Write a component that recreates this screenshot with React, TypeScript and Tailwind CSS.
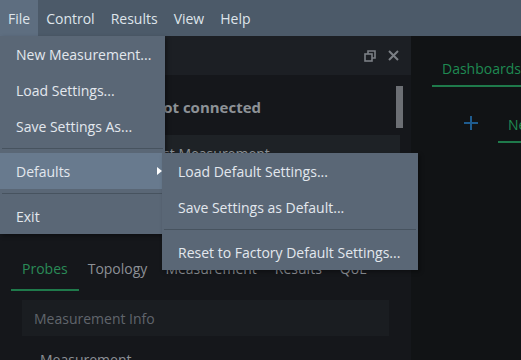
import React from 'react';

const menuFont = { fontFamily: '"Open Sans", "Noto Sans", sans-serif' };

const Separator: React.FC = () => (
  <div className="my-1 mx-[2px] h-px bg-[#47535f]" />
);

const MenuItem: React.FC<{ label: string; active?: boolean; arrow?: boolean }> = ({ label, active, arrow }) => (
  <div
    className={
      'relative flex h-9 items-center pl-4 pr-8 text-[14px] text-[#e3e8ee] whitespace-nowrap ' +
      (active ? 'bg-[#687a8e]' : '')
    }
  >
    {label}
    {arrow && (
      <span className="absolute right-[3px] top-1/2 -translate-y-1/2 h-0 w-0 border-y-[4px] border-l-[5px] border-y-transparent border-l-white" />
    )}
  </div>
);

const App: React.FC = () => {
  return (
    <div className="relative h-[360px] w-[521px] overflow-hidden bg-[#15171b]" style={menuFont}>
      {/* menu bar */}
      <div className="flex h-9 items-center bg-[#4c5a69] text-[14px] text-[#dfe5eb]">
        <div className="flex h-full items-center bg-[#5e6e80] px-2">File</div>
        <div className="px-2">Control</div>
        <div className="px-2">Results</div>
        <div className="px-2">View</div>
        <div className="px-2">Help</div>
      </div>

      <div className="flex h-[324px]">
        {/* left dock */}
        <div className="flex w-[411px] shrink-0 flex-col bg-[#15171b]">
          <div className="flex h-[39px] shrink-0 items-center justify-end gap-[12px] bg-[#1c1f24] pr-[12px]">
            <svg width="12" height="12" viewBox="0 0 12 12" fill="none" stroke="#7b7f85" strokeWidth="1.6">
              <rect x="1" y="4" width="7" height="7" />
              <path d="M4 4V1h7v7H8" />
            </svg>
            <svg width="11" height="11" viewBox="0 0 11 11" stroke="#7b7f85" strokeWidth="2">
              <path d="M1 1l9 9M10 1l-9 9" />
            </svg>
          </div>
          <div className="relative min-h-0 flex-1 overflow-hidden">
            <div className="flex h-[60px] items-center pl-[151px] pt-[4px] text-[15px] font-bold text-[#8d9297]">
              Not connected
            </div>
            <div className="absolute right-[8px] top-[11px] h-[42px] w-[7px] bg-[#6c6f74]" />
            <div className="ml-[11px] mr-[11px] h-[40px] bg-[#1e2226] pl-[137px] pt-[8px] text-[14px] text-[#8d9297]">
              Last Measurement
            </div>
            <div className="mt-[83px] flex h-[33px] items-start px-[11px] text-[14px] text-[#8c9096]">
              <div className="flex h-full flex-col items-center">
                <div className="px-[11px] text-[#2a8b57]">Probes</div>
                <div className="mt-auto h-[2px] w-full bg-[#1f7a4b]" />
              </div>
              <div className="px-[9px]">Topology</div>
              <div className="px-[9px]">Measurement</div>
              <div className="px-[9px]">Results</div>
              <div className="px-[9px]">QoE</div>
            </div>
            <div className="ml-[22px] mt-[9px] flex h-[36px] w-[367px] items-center bg-[#1a1d21] pl-[12px] text-[14px] text-[#60656c]">
              Measurement Info
            </div>
            <div className="ml-[40px] mt-[13px] text-[14px] text-[#8c9096]">Measurement</div>
          </div>
        </div>

        {/* right dock */}
        <div className="flex min-w-0 flex-1 flex-col overflow-hidden bg-[#111315]">
          <div className="ml-[21px] mt-[22px] flex flex-col">
            <div className="pl-[10px] text-[14px] text-[#1f8a52] whitespace-nowrap">Dashboards</div>
            <div className="mt-[6px] h-[2px] bg-[#1f7a4b]" />
          </div>
          <div className="mt-[27px] flex items-start">
            <div className="ml-[52px] mt-[1px] shrink-0">
              <svg width="16" height="16" viewBox="0 0 16 16" stroke="#1f5c8f" strokeWidth="2">
                <path d="M8 1v14M1 8h14" />
              </svg>
            </div>
            <div className="ml-[19px] flex flex-col">
              <div className="pl-[10px] text-[14px] text-[#1f8a52] whitespace-nowrap">New</div>
              <div className="mt-[6px] h-[2px] w-[40px] bg-[#1f7a4b]" />
            </div>
          </div>
        </div>
      </div>

      {/* File menu */}
      <div className="absolute left-0 top-9 w-[165px] bg-[#5a6776] shadow-[2px_2px_4px_rgba(0,0,0,0.35)]">
        <MenuItem label="New Measurement..." />
        <MenuItem label="Load Settings..." />
        <MenuItem label="Save Settings As..." />
        <Separator />
        <MenuItem label="Defaults" active arrow />
        <Separator />
        <MenuItem label="Exit" />
      </div>

      {/* Defaults submenu */}
      <div className="absolute left-[162px] top-[153px] w-[256px] bg-[#5a6776] shadow-[2px_2px_4px_rgba(0,0,0,0.35)]">
        <MenuItem label="Load Default Settings..." />
        <MenuItem label="Save Settings as Default..." />
        <Separator />
        <MenuItem label="Reset to Factory Default Settings..." />
      </div>
    </div>
  );
};

export default App;
